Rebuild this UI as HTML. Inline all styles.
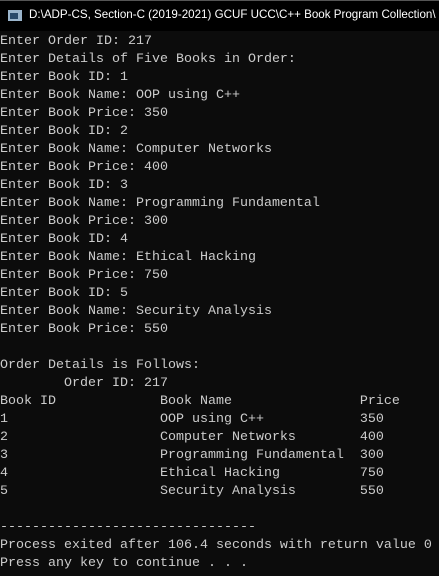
<!DOCTYPE html>
<html><head><style>
html,body{margin:0;padding:0;background:#0c0c0c;width:439px;height:576px;overflow:hidden}
.t{position:absolute;left:0;top:0;width:439px;height:31px;background:#000;border-top:1px solid #555;box-sizing:border-box;overflow:hidden}
.t span{position:absolute;left:29px;top:7px;font:11.6px "Liberation Sans",sans-serif;color:#fff;white-space:nowrap}
.ic{position:absolute;left:8px;top:9px;width:14px;height:11px;background:#9bb5cc}
.ic:after{content:"";position:absolute;left:2px;top:3px;width:8px;height:6px;background:#2a4a6a}
pre{position:absolute;left:0;top:33px;margin:0;font:13.33px/18px "Liberation Mono",monospace;color:#cccccc}
</style></head><body>
<div class="t"><div class="ic"></div><span>D:\ADP-CS, Section-C (2019-2021) GCUF UCC\C++ Book Program Collection\</span></div>
<pre>Enter Order ID: 217
Enter Details of Five Books in Order:
Enter Book ID: 1
Enter Book Name: OOP using C++
Enter Book Price: 350
Enter Book ID: 2
Enter Book Name: Computer Networks
Enter Book Price: 400
Enter Book ID: 3
Enter Book Name: Programming Fundamental
Enter Book Price: 300
Enter Book ID: 4
Enter Book Name: Ethical Hacking
Enter Book Price: 750
Enter Book ID: 5
Enter Book Name: Security Analysis
Enter Book Price: 550

Order Details is Follows:
        Order ID: 217
Book ID             Book Name                Price
1                   OOP using C++            350
2                   Computer Networks        400
3                   Programming Fundamental  300
4                   Ethical Hacking          750
5                   Security Analysis        550

--------------------------------
Process exited after 106.4 seconds with return value 0
Press any key to continue . . .</pre>
</body></html>
